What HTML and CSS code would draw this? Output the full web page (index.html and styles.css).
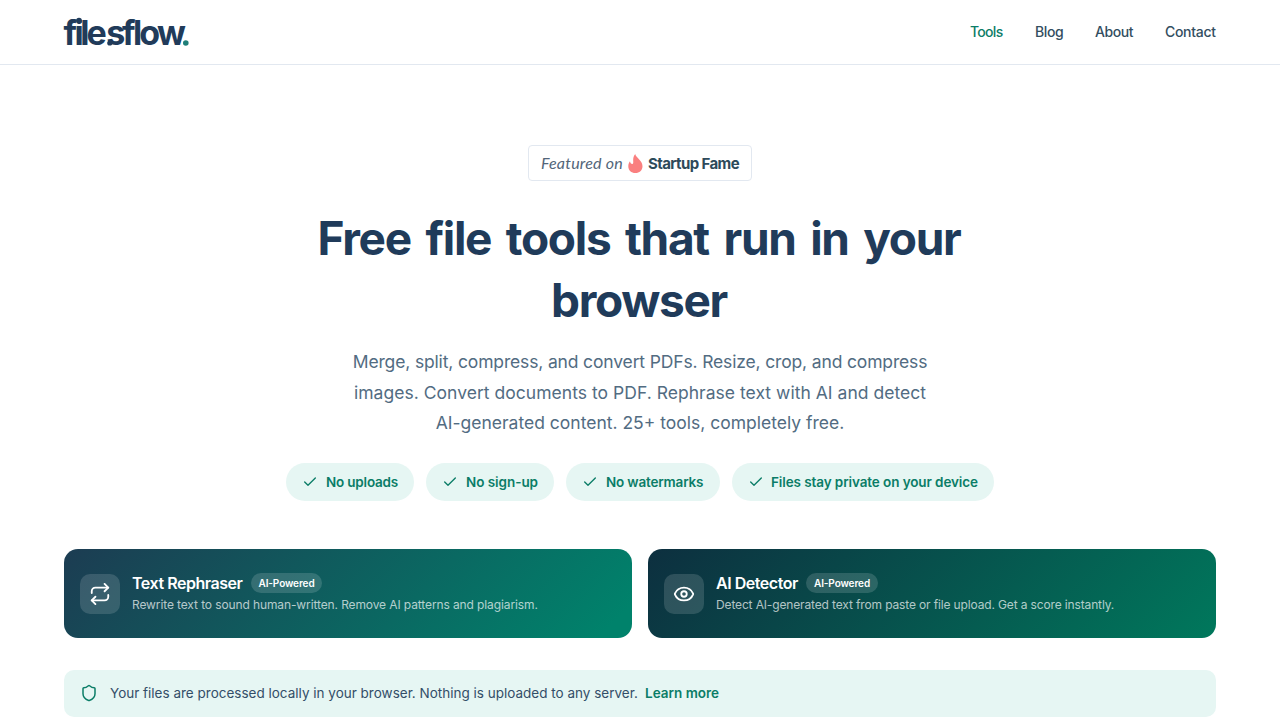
FILE: index.html
```html
<!DOCTYPE html>
<html lang="en">
<head>
<meta charset="utf-8">
<title>filesflow</title>
<link rel="stylesheet" href="styles.css">
</head>
<body>
<header class="site-header">
  <a class="logo" aria-label="filesflow">
    <svg width="126" height="32" viewBox="0 0 126 32"><text x="-.5 10.6 16.2 22.6 42.3 58 69 75.2 93" y="29.2" class="logo-text">filesflow</text><circle cx="15" cy="4.6" r="2.9" fill="#213b5a"/><circle cx="45.8" cy="27" r="2.6" fill="#213b5a"/><circle cx="121.8" cy="27" r="2.8" fill="#1f7f78"/></svg>
  </a>
  <nav class="nav">
    <a class="active n1">Tools</a><a class="n2">Blog</a><a class="n3">About</a><a class="n4">Contact</a>
  </nav>
</header>
<main>
  <section class="hero">
    <div class="fame">
      <span class="fame-on">Featured on</span>
      <svg class="flame" width="15" height="19" viewBox="0 0 15 19"><path fill="#fa7f7f" d="M7.2 0C7.6 3.6 14.5 6.2 14.5 12.2C14.5 16.2 11.4 19 7.4 19C3.3 19 .3 16.2.3 12.2C.3 10.3 1 8.6 2 7.3C2.3 9 3 9.9 4.2 9.9C6.8 9.9 3.3 4.4 7.2 0Z"/></svg>
      <span class="fame-name">Startup Fame</span>
    </div>
    <h1><span class="h-a">Free file tools that run in your</span><br><span class="h-b">browser</span></h1>
    <p class="lead"><span class="l1">Merge, split, compress, and convert PDFs. Resize, crop, and compress</span><br><span class="l2">images. Convert documents to PDF. Rephrase text with AI and detect</span><br><span class="l3">AI-generated content. 25+ tools, completely free.</span></p>
    <div class="pills">
      <div class="pill p1"><svg class="check" viewBox="0 0 24 24"><path d="M20 6 9 17l-5-5"/></svg><span>No uploads</span></div>
      <div class="pill p2"><svg class="check" viewBox="0 0 24 24"><path d="M20 6 9 17l-5-5"/></svg><span>No sign-up</span></div>
      <div class="pill p3"><svg class="check" viewBox="0 0 24 24"><path d="M20 6 9 17l-5-5"/></svg><span>No watermarks</span></div>
      <div class="pill p4"><svg class="check" viewBox="0 0 24 24"><path d="M20 6 9 17l-5-5"/></svg><span>Files stay private on your device</span></div>
    </div>
  </section>
  <section class="cards">
    <article class="card rephraser">
      <div class="tile"><svg viewBox="0 0 24 24"><path d="m17 1 4 4-4 4"/><path d="M3 11V9a4 4 0 0 1 4-4h14"/><path d="m7 23-4-4 4-4"/><path d="M21 13v2a4 4 0 0 1-4 4H3"/></svg></div>
      <div><h2><span class="t1">Text Rephraser</span><em>AI-Powered</em></h2><p class="d1">Rewrite text to sound human-written. Remove AI patterns and plagiarism.</p></div>
    </article>
    <article class="card detector">
      <div class="tile"><svg viewBox="0 0 24 24"><path d="M2.062 12.348a1 1 0 0 1 0-.696 10.75 10.75 0 0 1 19.876 0 1 1 0 0 1 0 .696 10.75 10.75 0 0 1-19.876 0"/><circle cx="12" cy="12" r="3"/></svg></div>
      <div><h2><span class="t2">AI Detector</span><em>AI-Powered</em></h2><p class="d2">Detect AI-generated text from paste or file upload. Get a score instantly.</p></div>
    </article>
  </section>
  <aside class="notice">
    <svg viewBox="0 0 24 24"><path d="M20 13c0 5-3.5 7.5-7.66 8.95a1 1 0 0 1-.67-.01C7.5 20.5 4 18 4 13V6a1 1 0 0 1 1-1c2 0 4.5-1.2 6.24-2.72a1.17 1.17 0 0 1 1.52 0C14.51 3.81 17 5 19 5a1 1 0 0 1 1 1z"/></svg>
    <span class="note">Your files are processed locally in your browser. Nothing is uploaded to any server.</span><a>Learn more</a>
  </aside>
</main>
</body>
</html>
```
FILE: styles.css
```css
* { box-sizing: border-box; }
body { margin: 0; height: 720px; overflow: hidden; background: #fff; font-family: Inter, "Liberation Sans", sans-serif; color: #334e68; }
h1, h2, p { margin: 0; }
span, a, em { white-space: nowrap; }
.site-header { height: 65px; padding: 0 64px; border-bottom: 1px solid #e2e8f0; display: flex; align-items: center; justify-content: space-between; }
.logo { display: flex; }
.logo svg { overflow: visible; }
.logo-text { font-size: 34px; font-weight: 700; fill: #213b5a; }
.nav { display: flex; gap: 32px; font-size: 14px; font-weight: 500; line-height: 20px; color: #334e5f; }
.nav .active { color: #0d7d68; }
.n1 { width: 33px; letter-spacing: -.7px; }
.n2 { width: 28px; letter-spacing: -.4px; }
.n3 { width: 38px; letter-spacing: -.4px; }
.n4 { width: 51px; letter-spacing: -.3px; }
.hero { padding-top: 80px; display: flex; flex-direction: column; align-items: center; text-align: center; }
.fame { width: 224px; height: 36px; border: 1px solid #e2e8f0; border-radius: 4px; display: flex; align-items: center; padding-left: 12px; }
.fame-on { width: 82px; padding-bottom: 2px; text-align: left; font-family: Lato, sans-serif; font-style: italic; font-size: 16px; letter-spacing: .22px; color: #526579; }
.flame { margin: 0 5px; flex: none; }
.fame-name { font-size: 15px; font-weight: 700; letter-spacing: -.6px; color: #2d4a5a; }
h1 { margin-top: 26px; font-size: 46px; font-weight: 700; line-height: 62.4px; color: #203b5a; letter-spacing: -1.3px; }
.h-a { word-spacing: 5px; }
h1 span { margin-left: -2px; }
.lead { margin-top: 15.4px; font-size: 17.5px; line-height: 30.6px; color: #526c82; }
.l1 { letter-spacing: -.15px; }
.l2 { letter-spacing: .03px; }
.pills { margin-top: 23.6px; display: flex; gap: 12px; }
.pill { height: 38px; border-radius: 19px; background: #e6f6f3; color: #0b7d67; display: flex; align-items: center; gap: 8px; padding: 1px 0 0 16px; font-size: 13.5px; font-weight: 600; letter-spacing: -.2px; }
.check { width: 16px; height: 16px; fill: none; stroke: currentColor; stroke-width: 2; stroke-linecap: round; stroke-linejoin: round; flex: none; }
.p1, .p2 { width: 128px; }
.p2 { letter-spacing: -.05px; }
.p3 { width: 154px; letter-spacing: -.18px; }
.p4 { width: 262px; gap: 7px; letter-spacing: -.1px; }
.cards { margin: 48px 64px 0; display: grid; grid-template-columns: 1fr 1fr; gap: 16px; }
.card { height: 89px; border-radius: 14px; display: flex; align-items: center; gap: 12px; padding: 0 16px; color: #fff; }
.rephraser { background: linear-gradient(135deg, #1c3c52, #00826b 95%); }
.detector { background: linear-gradient(135deg, #0d2f3f, #00785c); }
.tile { width: 40px; height: 40px; border-radius: 10px; background: rgba(255,255,255,.14); display: grid; place-items: center; margin-top: 1px; }
.tile svg { width: 22px; height: 22px; fill: none; stroke: #fff; stroke-width: 2; stroke-linecap: round; stroke-linejoin: round; }
.card h2 { display: flex; align-items: center; gap: 8px; height: 22px; font-size: 16px; font-weight: 600; letter-spacing: -.47px; }
.card em { font-style: normal; font-size: 10px; font-weight: 600; letter-spacing: -.1px; width: 71px; height: 20px; line-height: 20px; text-align: center; border-radius: 10px; background: rgba(255,255,255,.15); }
.detector em { width: 72px; }
.card p { font-size: 12px; line-height: 20px; padding-top: 1px; color: rgba(255,255,255,.7); white-space: nowrap; }
.d1 { letter-spacing: -.11px; }
.d2 { letter-spacing: -.14px; }
.t1 { width: 111px; }
.t2 { width: 82px; }
.notice { margin: 32px 64px 0; height: 47px; border-radius: 10px; background: #e6f6f3; display: flex; align-items: center; padding-left: 16px; font-size: 13.5px; color: #334e68; }
.notice svg { width: 18px; height: 18px; margin-right: 12px; fill: none; stroke: #0b7d67; stroke-width: 2; stroke-linecap: round; stroke-linejoin: round; }
.note { width: 535px; letter-spacing: 0; }
.notice a { color: #0b7d67; font-weight: 600; letter-spacing: 0; }
```
